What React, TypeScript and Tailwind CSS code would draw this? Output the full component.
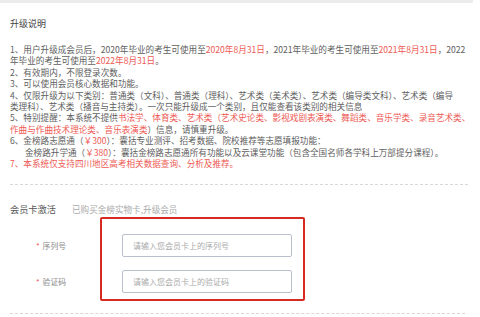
import React from "react";

const R = ({ children }: { children: React.ReactNode }) => (
  <span className="text-[#ee5a55]">{children}</span>
);

export default function App() {
  const lines: React.ReactNode[] = [
    <>1、用户升级成会员后，2020年毕业的考生可使用至<R>2020年8月31日</R>，2021年毕业的考生可使用至<R>2021年8月31日</R>，2022</>,
    <>年毕业的考生可使用至<R>2022年8月31日</R>。</>,
    <>2、有效期内，不限登录次数。</>,
    <>3、可以使用会员核心数据和功能。</>,
    <>4、仅限升级为以下类别：普通类（文科）、普通类（理科）、艺术类（美术类）、艺术类（编导类文科）、艺术类（编导</>,
    <>类理科）、艺术类（播音与主持类）。一次只能升级成一个类别，且仅能查看该类别的相关信息</>,
    <>5、特别提醒：本系统不提供<R>书法学、体育类、艺术类（艺术史论类、影视戏剧表演类、舞蹈类、音乐学类、录音艺术类、</R></>,
    <><R>作曲与作曲技术理论类、音乐表演类</R>）信息，请慎重升级。</>,
    <>6、金榜路志愿通（<R>￥300</R>）：囊括专业测评、招考数据、院校推荐等志愿填报功能：</>,
    <><span className="inline-block w-[15px]" />金榜路升学通（<R>￥380</R>）：囊括金榜路志愿通所有功能以及云课堂功能（包含全国名师各学科上万部提分课程）。</>,
    <><R>7、本系统仅支持四川地区高考相关数据查询、分析及推荐。</R></>,
  ];
  return (
    <div
      className="relative w-[480px] h-[317px] overflow-hidden bg-white text-[#606060]"
      style={{ fontFamily: '"Noto Sans CJK SC", "Noto Sans", sans-serif' }}
    >
      <div className="h-[3px] w-[473px] bg-[#ececec]" />
      <div className="pl-[10px] pr-[12px]">
        <div className="mt-[15px] text-[9px] leading-[12px] text-[#444]">升级说明</div>
        <div className="mt-[14px] text-[8.6px] leading-[11.4px]">
          {lines.map((l, i) => (
            <div key={i} className="whitespace-nowrap">{l}</div>
          ))}
        </div>
        <div className="mt-[15px] border-t border-dashed border-[#d8d8d8] w-[458px]" />
        <div className="mt-[18px] flex items-center text-[9.2px] leading-[12px]">
          <span className="text-[#555]">会员卡激活</span>
          <span className="ml-[16px] text-[#aaa] text-[8.6px]">已购买金榜实物卡,升级会员</span>
        </div>
        <div className="mt-[19px] flex flex-col gap-[13px]">
          <div className="flex items-center">
            <div className="w-[56px] text-right text-[7.8px] text-[#888]">
              <span className="text-[#ee5a55] mr-[3px]">*</span>序列号
            </div>
            <div className="ml-[56px] h-[23px] w-[170px] rounded-[2px] border border-[#b9bfcc] pl-[10px] flex items-center text-[8px] text-[#aaa]">
              请输入您会员卡上的序列号
            </div>
          </div>
          <div className="flex items-center">
            <div className="w-[56px] text-right text-[7.8px] text-[#888]">
              <span className="text-[#ee5a55] mr-[3px]">*</span>验证码
            </div>
            <div className="ml-[56px] h-[23px] w-[170px] rounded-[2px] border border-[#b9bfcc] pl-[10px] flex items-center text-[8px] text-[#aaa]">
              请输入您会员卡上的验证码
            </div>
          </div>
        </div>
        <div className="mt-[20px] border-t border-dashed border-[#d8d8d8] w-[455px]" />
      </div>
      <div className="absolute left-[100px] top-[217px] w-[205px] h-[84px] rounded-[2px] border-2 border-[#d62a22]" />
    </div>
  );
}
